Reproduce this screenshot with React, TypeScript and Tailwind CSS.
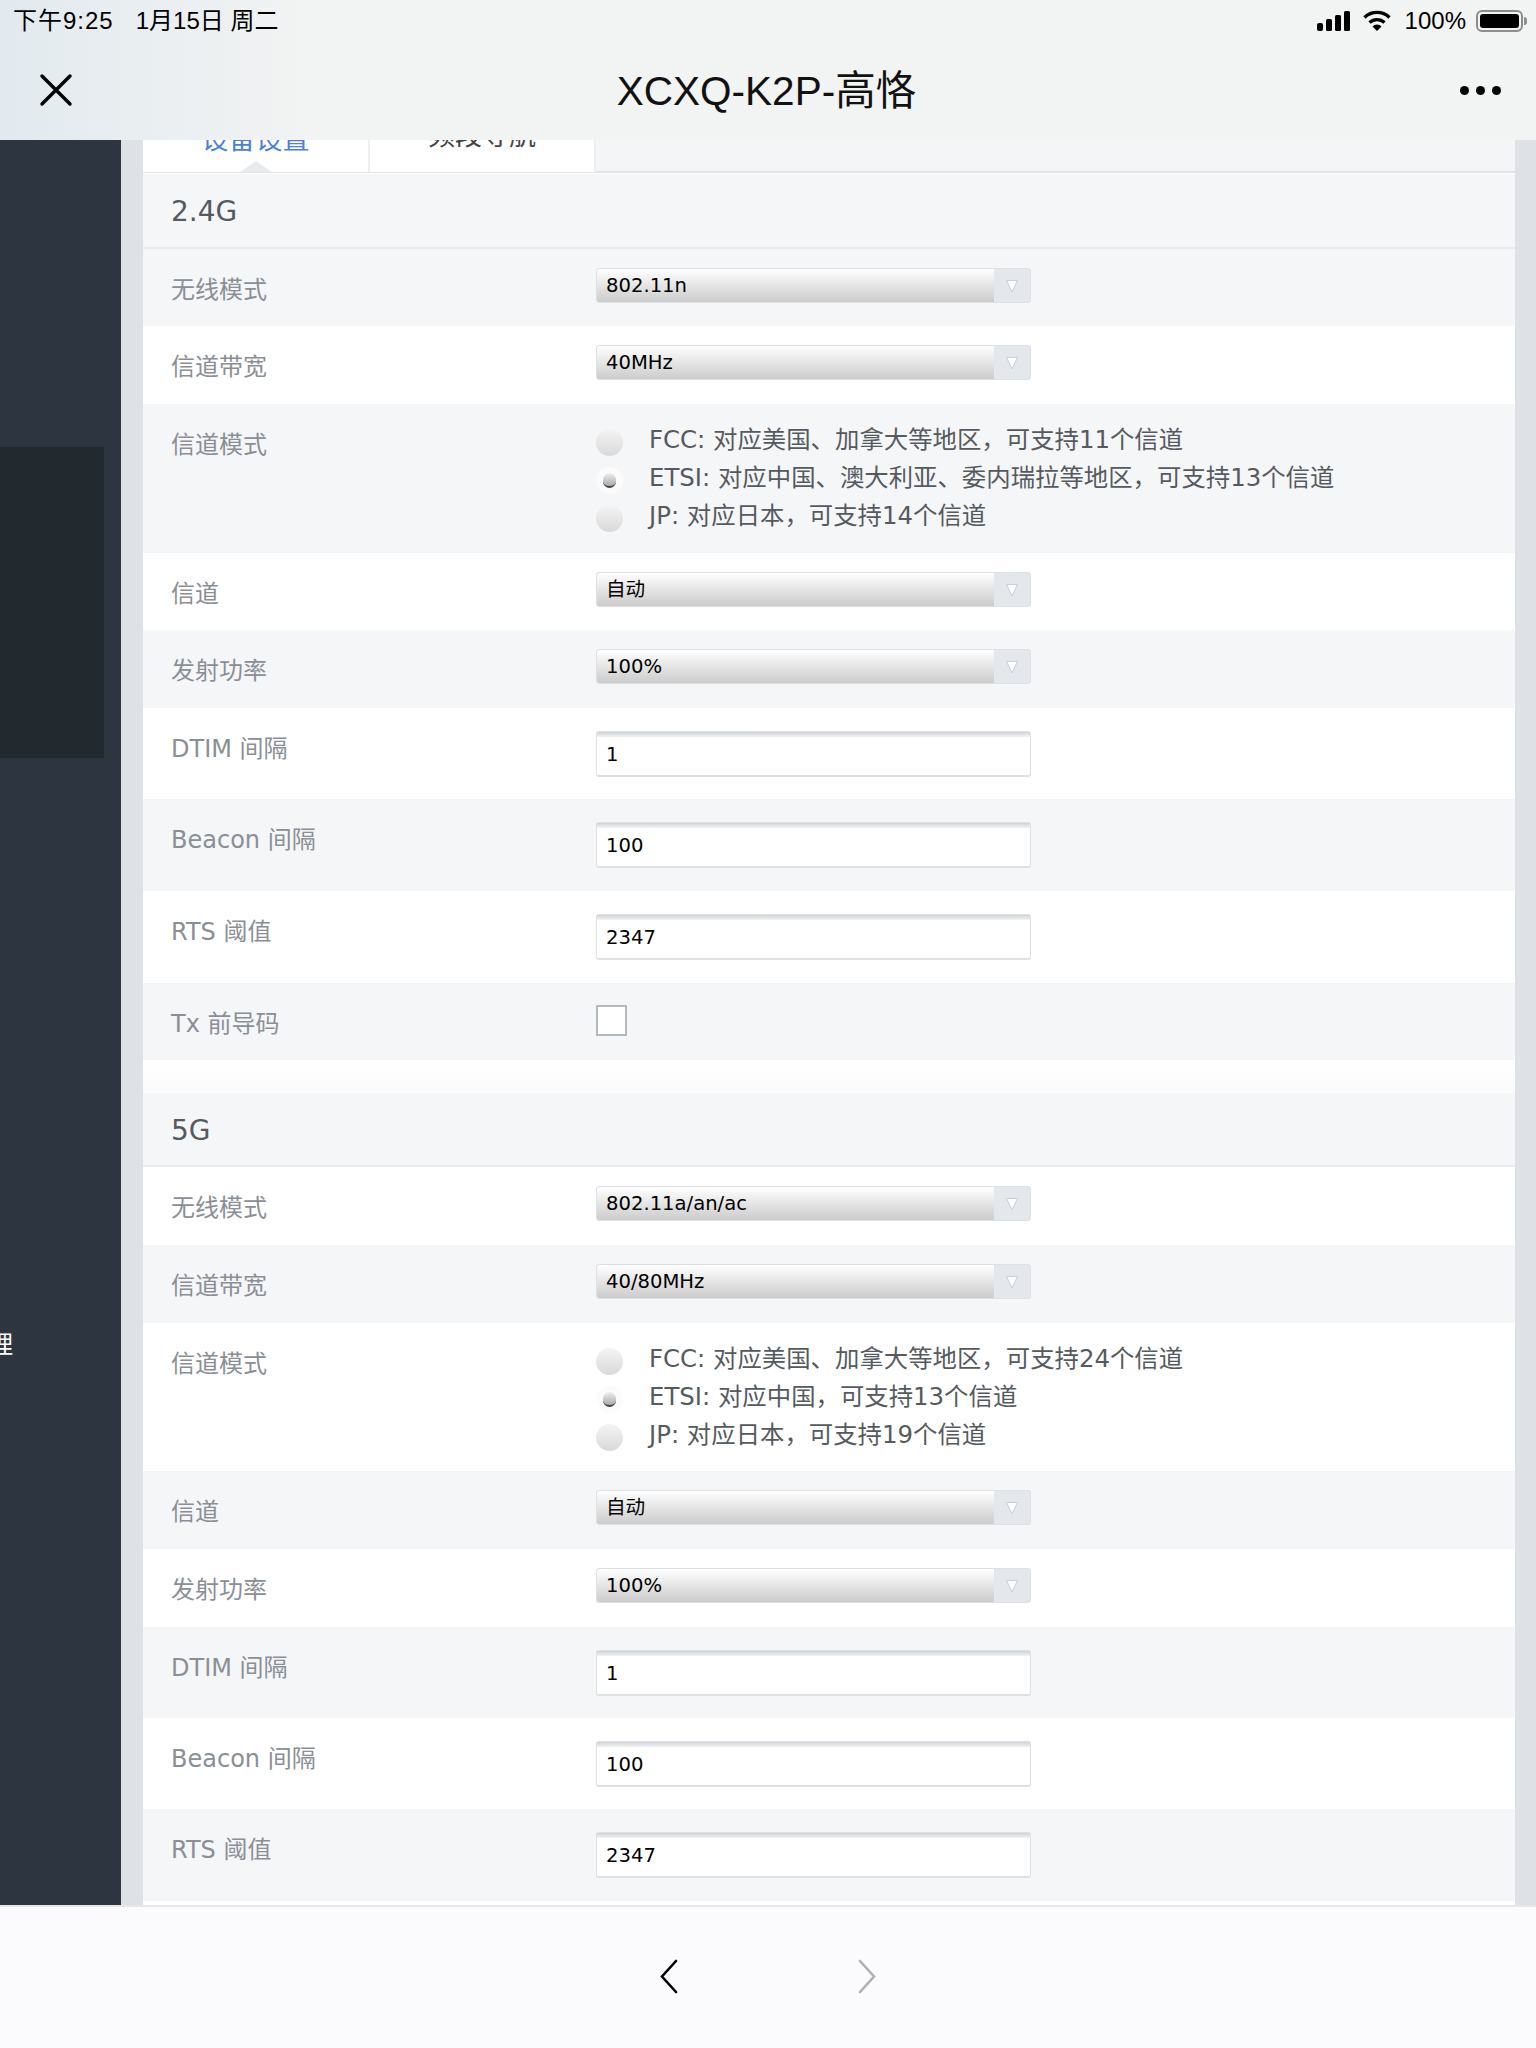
const sans = "font-['Liberation_Sans','Noto_Sans_CJK_SC',sans-serif]";
const body = "font-['DejaVu_Sans','Noto_Sans_CJK_SC',sans-serif]";

function Row({ label, h, odd, children }: { label: string; h: string; odd?: boolean; children: React.ReactNode }) {
  return (
    <div className={`flex ${h} ${odd ? "bg-[#f5f6f8]" : "bg-white"}`}>
      <div className="w-[453px] shrink-0 pl-[28px] pt-[23px] text-[24px] leading-[36px] text-[#8a8f96]">{label}</div>
      <div>{children}</div>
    </div>
  );
}

function Select({ value }: { value: string }) {
  return (
    <div className="mt-[19px] flex h-[35px] w-[435px] rounded-[3px] border border-[#dde1e6] bg-[#e4e8ec]">
      <div className="flex-1 rounded-l-[3px] bg-gradient-to-b from-white to-[#cccccc] pl-[9px] text-[19.6px] leading-[34px] text-black">
        {value}
      </div>
      <div className="flex w-[36px] items-center justify-center">
        <svg width="14" height="14" viewBox="0 0 14 14">
          <path d="M1.5 1.5h11L7 13z" fill="#fff" stroke="#c9ced4" strokeWidth="1" />
        </svg>
      </div>
    </div>
  );
}

function TextInput({ value }: { value: string }) {
  return (
    <div className="mt-[23px] h-[46px] w-[435px] rounded-[3px] border border-[#dde1e6] border-b-2 bg-white">
      <div className="h-[5px] bg-gradient-to-b from-[#d0d3d6] to-[#f2f3f4]" />
      <div className="pl-[9px] text-[19.6px] leading-[36px] text-black">{value}</div>
    </div>
  );
}

function Radio({ checked }: { checked?: boolean }) {
  if (checked) {
    return (
      <span className="mt-[5px] flex h-[27px] w-[27px] items-center justify-center rounded-full bg-[#fbfbfc]">
        <span className="h-[15px] w-[13px] rounded-full border-b-2 border-[#444] bg-gradient-to-b from-[#f0f0f0] to-[#aaaaaa]" />
      </span>
    );
  }
  return <span className="mt-[5px] h-[27px] w-[27px] rounded-full bg-gradient-to-b from-[#f4f4f4] to-[#d9d9d9]" />;
}

function RadioGroup({ items, checked }: { items: string[]; checked: number }) {
  return (
    <div className="pt-[17px]">
      {items.map((text, i) => (
        <div key={text} className="flex h-[38px] items-center gap-[26px]">
          <Radio checked={i === checked} />
          <span className="text-[24.4px] leading-[38px] text-[#555a60]">{text}</span>
        </div>
      ))}
    </div>
  );
}

type SectionProps = {
  title: string;
  modes: string;
  bw: string;
  channels: string[];
  heights: string[];
  titleH: string;
  check?: boolean;
};

function Section({ title, modes, bw, channels, heights, titleH, check }: SectionProps) {
  const first = title === "2.4G";
  return (
    <>
      <div className={`flex ${titleH} items-center border-b-2 border-[#e8eaee] bg-[#f5f6f8] pl-[28px] pt-[3px] text-[28px] text-[#555a60]`}>
        {title}
      </div>
      <Row label="无线模式" h={heights[0]} odd={first}>
        <Select value={modes} />
      </Row>
      <Row label="信道带宽" h={heights[1]} odd={!first}>
        <Select value={bw} />
      </Row>
      <Row label="信道模式" h={heights[2]} odd={first}>
        <RadioGroup items={channels} checked={1} />
      </Row>
      <Row label="信道" h={heights[3]} odd={!first}>
        <Select value="自动" />
      </Row>
      <Row label="发射功率" h={heights[4]} odd={first}>
        <Select value="100%" />
      </Row>
      <Row label="DTIM 间隔" h={heights[5]} odd={!first}>
        <TextInput value="1" />
      </Row>
      <Row label="Beacon 间隔" h={heights[6]} odd={first}>
        <TextInput value="100" />
      </Row>
      <Row label="RTS 阈值" h={heights[7]} odd={!first}>
        <TextInput value="2347" />
      </Row>
      {check && (
        <Row label="Tx 前导码" h="h-[77px]" odd>
          <div className="mt-[22px] h-[31px] w-[31px] border-2 border-[#b4b9c0] bg-white" />
        </Row>
      )}
    </>
  );
}

export default function App() {
  return (
    <div className={`flex h-[2048px] w-[1536px] flex-col overflow-hidden bg-white ${body}`}>
      {/* Top bar */}
      <div className={`relative z-10 h-[140px] shrink-0 bg-gradient-to-r from-[#e2eaef] to-[#f2f3f3] to-[20%] ${sans}`}>
        <div className="flex h-[42px] items-center justify-between pl-[13px] pr-[9px] text-[24px] text-black">
          <div className="flex gap-[22px]">
            <span className="tracking-[1px]">下午9:25</span>
            <span>1月15日 周二</span>
          </div>
          <div className="flex items-center">
            <svg width="33" height="20" viewBox="0 0 33 20" fill="#000">
              <rect x="0" y="12" width="6" height="8" rx="2" />
              <rect x="9" y="8" width="6" height="12" rx="1.5" />
              <rect x="18" y="4" width="6" height="16" rx="1.5" />
              <rect x="27" y="0" width="6" height="20" rx="1.5" />
            </svg>
            <svg className="ml-[13px]" width="28" height="22" viewBox="0 0 28 22" fill="none" stroke="#000" strokeWidth="3.2">
              <path d="M1.5 7.5a18 18 0 0 1 25 0" />
              <path d="M6.5 12.5a11 11 0 0 1 15 0" />
              <path d="M14 21l-4.5-4.5a6 6 0 0 1 9 0z" fill="#000" stroke="none" />
            </svg>
            <span className="ml-[14px]">100%</span>
            <div className="ml-[10px] flex items-center">
              <div className="h-[22px] w-[47px] rounded-[6px] border-2 border-[#8c8c8c] p-[2px]">
                <div className="h-full rounded-[3px] bg-black" />
              </div>
              <div className="ml-[1px] h-[8px] w-[3px] rounded-r-sm bg-[#8c8c8c]" />
            </div>
          </div>
        </div>
        <div className="flex h-[96px] items-center justify-between pl-[39px] pr-[35px]">
          <svg width="34" height="34" viewBox="0 0 34 34" fill="none" stroke="#000" strokeWidth="3.4" strokeLinecap="round">
            <path d="M3 3l28 28M31 3L3 31" />
          </svg>
          <div className="mt-[2px] text-[40.5px] leading-[50px] text-[#111]">XCXQ-K2P-高恪</div>
          <div className="flex gap-[7px]">
            <span className="h-[9px] w-[9px] rounded-full bg-black" />
            <span className="h-[9px] w-[9px] rounded-full bg-black" />
            <span className="h-[9px] w-[9px] rounded-full bg-black" />
          </div>
        </div>
      </div>

      {/* Page behind */}
      <div className="flex min-h-0 flex-1 overflow-hidden">
        <div className="w-[121px] shrink-0 bg-[#2c3540] pt-[307px] text-[24px] text-white">
          <div className="h-[311px] w-[104px] bg-[#222a30]" />
          <div className="relative mt-[569px] h-[36px] w-full overflow-hidden">
            <span className={`absolute left-[-11px] top-0 ${sans}`}>理</span>
          </div>
        </div>
        <div className="w-[22px] shrink-0 bg-[#dee1e6]" />
        <div className="w-[1372px] shrink-0">
          <div className="flex h-[33px] border-b-2 border-[#e2e4e8] bg-[#f4f5f7]">
            <div className="relative h-[32px] w-[225px] overflow-hidden bg-white text-center">
              <div className="-mt-[18px] text-[27px] leading-[36px] text-[#4a7fdc]">设备设置</div>
              <div className="absolute bottom-0 left-1/2 h-0 w-0 -translate-x-1/2 border-x-[16px] border-b-[11px] border-x-transparent border-b-[#e8eaee]" />
            </div>
            <div className="h-[32px] w-[228px] overflow-hidden border-x-2 border-[#eceef1] bg-white text-center">
              <div className="-mt-[22px] text-[27px] leading-[36px] text-[#444]">频段导航</div>
            </div>
          </div>
          <div className="h-[1px] bg-white" />
          <Section
            title="2.4G"
            modes="802.11n"
            bw="40MHz"
            check
            titleH="h-[75px]"
            heights={["h-[77px]", "h-[78px]", "h-[149px]", "h-[77px]", "h-[78px]", "h-[91px]", "h-[92px]", "h-[92px]"]}
            channels={[
              "FCC: 对应美国、加拿大等地区，可支持11个信道",
              "ETSI: 对应中国、澳大利亚、委内瑞拉等地区，可支持13个信道",
              "JP: 对应日本，可支持14个信道",
            ]}
          />
          <div className="h-[33px] bg-gradient-to-b from-white to-[#fbfbfc]" />
          <Section
            title="5G"
            modes="802.11a/an/ac"
            bw="40/80MHz"
            titleH="h-[74px]"
            heights={["h-[78px]", "h-[78px]", "h-[148px]", "h-[78px]", "h-[78px]", "h-[91px]", "h-[91px]", "h-[92px]"]}
            channels={[
              "FCC: 对应美国、加拿大等地区，可支持24个信道",
              "ETSI: 对应中国，可支持13个信道",
              "JP: 对应日本，可支持19个信道",
            ]}
          />
        </div>
        <div className="w-[21px] shrink-0 bg-[#dee1e6]" />
      </div>

      {/* Bottom bar */}
      <div className="flex h-[143px] shrink-0 items-start justify-center gap-[180px] border-t-2 border-[#e6e7ea] bg-[#fbfbfd] pt-[52px]">
        <svg width="18" height="35" viewBox="0 0 18 35" fill="none" stroke="#000" strokeWidth="2.6" strokeLinecap="round">
          <path d="M16 2L2 17.5L16 33" />
        </svg>
        <svg width="18" height="35" viewBox="0 0 18 35" fill="none" stroke="#b0b0b0" strokeWidth="2.6" strokeLinecap="round">
          <path d="M2 2l14 15.5L2 33" />
        </svg>
      </div>
    </div>
  );
}
